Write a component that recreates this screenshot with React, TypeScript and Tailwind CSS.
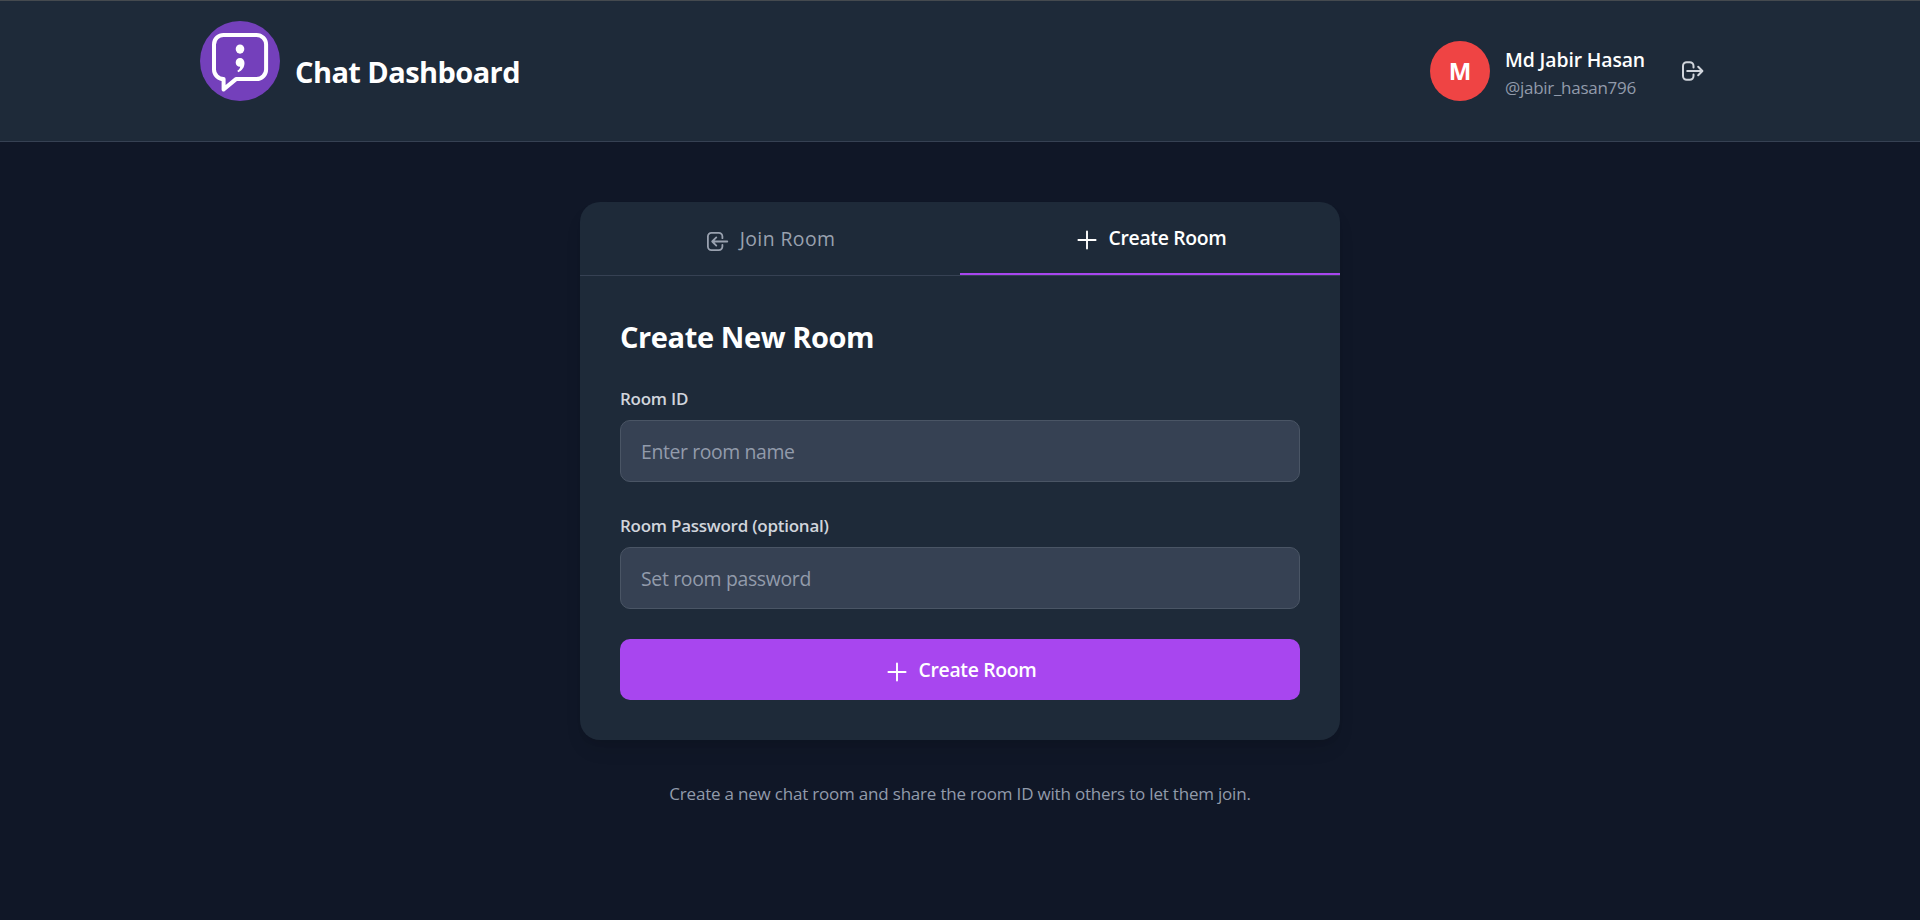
import type { ReactNode } from "react";

function Logo() {
  return (
    <svg className="mb-5 size-20 shrink-0" viewBox="0 0 80 80" fill="none">
      <circle cx="40" cy="40" r="40" fill="#7440bb" />
      <path
        d="M24 13.9H56.5A9.6 9.6 0 0 1 66.1 23.5V48.5A9.6 9.6 0 0 1 56.5 58.1H36L23.6 68.4V58.1A9.6 9.6 0 0 1 14 48.5V23.5A9.6 9.6 0 0 1 24 13.9Z"
        stroke="#fff"
        strokeWidth="4"
        strokeLinejoin="round"
      />
      <ellipse cx="40" cy="28.1" rx="4.3" ry="4.6" fill="#fff" />
      <path d="M40 37.1c2.7 0 4.5 2 4.5 5 0 4.3-2.4 7.6-6.3 9.2l-.9-1.5c1.7-1.2 2.7-2.5 2.9-4.1-2.7.1-4.5-1.7-4.5-4.2 0-2.5 1.8-4.4 4.3-4.4Z" fill="#fff" />
    </svg>
  );
}

function PlusIcon() {
  return (
    <svg className="relative top-[2.5px] size-[30px] shrink-0" viewBox="0 0 30 30" fill="none" stroke="currentColor" strokeWidth="1.9" strokeLinecap="round">
      <path d="M15 6.4v17.2M6.4 15h17.2" />
    </svg>
  );
}

function EnterIcon() {
  return (
    <svg className="relative top-[3px] h-[19px] w-[22px] shrink-0" viewBox="0 0 22 19" fill="none" stroke="currentColor" strokeWidth="1.8" strokeLinecap="round" strokeLinejoin="round">
      <path d="M15.4 6.2V4.4A3.5 3.5 0 0 0 11.9.9H4.4A3.5 3.5 0 0 0 .9 4.4V14.6A3.5 3.5 0 0 0 4.4 18.1H11.9A3.5 3.5 0 0 0 15.4 14.6V12.8M20.3 9.5H5.2M9.3 5.4 5.2 9.5 9.3 13.6" />
    </svg>
  );
}

function ExitIcon() {
  return (
    <svg className="h-5 w-[22px] shrink-0" viewBox="0 0 22 20" fill="none" stroke="currentColor" strokeWidth="2" strokeLinecap="round" strokeLinejoin="round">
      <path d="M11.5 6.4V4.9A3.7 3.7 0 0 0 7.8 1.2H4.7A3.7 3.7 0 0 0 1 4.9V15.1A3.7 3.7 0 0 0 4.7 18.8H7.8A3.7 3.7 0 0 0 11.5 15.1V13.6M5.2 10H20.3M16.2 5.7 20.4 10 16.2 14.3" />
    </svg>
  );
}

function Field({ label, placeholder, className, tracking }: { label: string; placeholder: string; className?: string; tracking: string }) {
  return (
    <label className={className}>
      <span className="mb-[9px] block text-[17px] leading-[25px] font-semibold tracking-[-0.25px] text-[#d1d5dc]">{label}</span>
      <input
        placeholder={placeholder}
        className={`block h-[62px] w-full rounded-[10px] border border-[#4a5565] bg-[#364153] px-5 text-[19.4px] text-white outline-none placeholder:text-[#929bab] ${tracking}`}
      />
    </label>
  );
}

function ActionLabel({ icon, children }: { icon: ReactNode; children: ReactNode }) {
  return (
    <span className="flex items-center justify-center gap-[7px] pr-[2px]">
      {icon}
      <span className="text-[19.4px] leading-[28px] font-semibold tracking-[-0.33px]">{children}</span>
    </span>
  );
}

export default function App() {
  return (
    <div className="flex min-h-screen flex-col bg-[#101727] font-['Open_Sans','Noto_Sans',sans-serif]">
      <header className="h-[142px] border-t border-b border-t-[#454a4f] border-b-[#364153] bg-[#1e2a39]">
        <div className="mx-auto flex h-full w-[1520px] items-center justify-between">
          <div className="flex items-center gap-[15px]">
            <Logo />
            <h1 className="pt-[2px] text-[29px] leading-10 font-bold tracking-[-0.57px] text-white">Chat Dashboard</h1>
          </div>
          <div className="flex items-center pr-4">
            <div className="flex size-[60px] items-center justify-center rounded-full bg-[#ef4444] text-[24px] font-bold text-white">M</div>
            <div className="ml-[15px] w-[177px] pt-[5px]">
              <p className="text-[19.4px] leading-[28px] font-semibold tracking-[-0.12px] text-white">Md Jabir Hasan</p>
              <p className="text-[17px] leading-[28px] tracking-[-0.28px] text-[#929bab]">@jabir_hasan796</p>
            </div>
            <button className="text-[#d1d5dc]" aria-label="Log out">
              <ExitIcon />
            </button>
          </div>
        </div>
      </header>

      <main className="mx-auto flex w-[760px] flex-col pt-[60px]">
        <section className="overflow-hidden rounded-[20px] bg-[#1e2a39] shadow-[0_12px_19px_-4px_rgba(0,0,0,0.1),0_5px_8px_-5px_rgba(0,0,0,0.1)]">
          <div className="flex h-[74px] border-b border-[#364153]">
            <button className="flex flex-1 items-center justify-center gap-[11px] text-[#99a1af]">
              <EnterIcon />
              <span className="-mr-[2px] text-[19.4px] leading-[28px] font-medium tracking-[0.42px]">Join Room</span>
            </button>
            <button className="flex flex-1 items-center justify-center border-b-2 border-[#a846ef] text-white">
              <ActionLabel icon={<PlusIcon />}>Create Room</ActionLabel>
            </button>
          </div>
          <form className="flex flex-col p-10">
            <h2 className="mb-[29px] text-[29px] leading-[41px] font-bold tracking-[-0.4px] text-white">Create New Room</h2>
            <Field label="Room ID" placeholder="Enter room name" tracking="tracking-[-0.38px]" />
            <Field label="Room Password (optional)" placeholder="Set room password" className="mt-[31px]" tracking="tracking-[-0.31px]" />
            <button type="button" className="mt-[30px] h-[61px] rounded-[10px] bg-[#a846ef] text-white">
              <ActionLabel icon={<PlusIcon />}>Create Room</ActionLabel>
            </button>
          </form>
        </section>
        <p className="mt-[41px] text-center text-[17px] leading-[25px] tracking-[-0.2px] text-[#929bab]">
          Create a new chat room and share the room ID with others to let them join.
        </p>
      </main>
    </div>
  );
}
